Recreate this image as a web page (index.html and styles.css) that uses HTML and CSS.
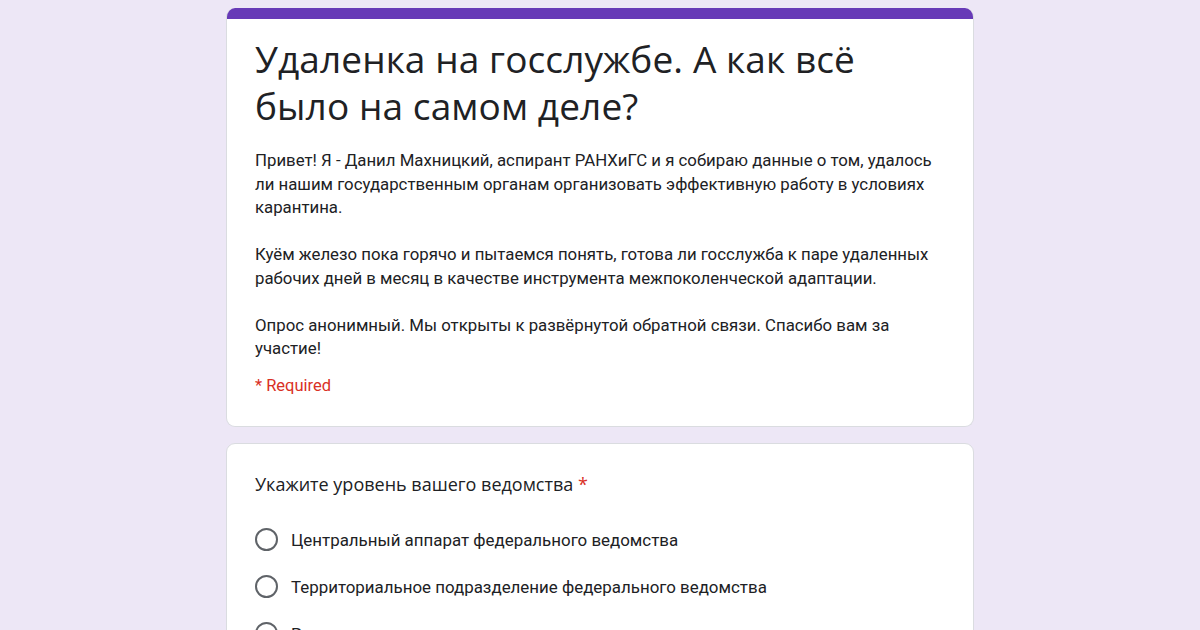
FILE: index.html
```html
<!DOCTYPE html>
<html lang="ru">
<head>
<meta charset="utf-8">
<title>Удаленка на госслужбе</title>
<link rel="stylesheet" href="styles.css">
</head>
<body>
<main class="form">
  <section class="card header-card">
    <div class="accent"></div>
    <div class="card-body">
      <h1 class="title">Удаленка на госслужбе. А как всё было на самом деле?</h1>
      <div class="desc">
        <p>Привет! Я - Данил Махницкий, аспирант РАНХиГС и я собираю данные о том, удалось ли нашим государственным органам организовать эффективную работу в условиях карантина.</p>
        <p>Куём железо пока горячо и пытаемся понять, готова ли госслужба к паре удаленных рабочих дней в месяц в качестве инструмента межпоколенческой адаптации.</p>
        <p>Опрос анонимный. Мы открыты к развёрнутой обратной связи. Спасибо вам за участие!</p>
      </div>
      <div class="required">* Required</div>
    </div>
  </section>
  <section class="card question-card">
    <div class="q-title">Укажите уровень вашего ведомства <span class="star">*</span></div>
    <ul class="options">
      <li class="option"><span class="radio"></span><span>Центральный аппарат федерального ведомства</span></li>
      <li class="option"><span class="radio"></span><span>Территориальное подразделение федерального ведомства</span></li>
      <li class="option"><span class="radio"></span><span>Региональное ведомство</span></li>
    </ul>
  </section>
</main>
</body>
</html>
```
FILE: styles.css
```css
* { box-sizing: border-box; }
html, body { margin: 0; padding: 0; }
body {
  background: #ede7f6;
  font-family: Roboto, "Liberation Sans", sans-serif;
  color: #202124;
  height: 630px;
  overflow: hidden;
}
.form {
  width: 748px;
  margin: 0 auto;
  padding-top: 8px;
  display: flex;
  flex-direction: column;
  gap: 16px;
}
.card {
  background: #fff;
  border: 1px solid #dadce0;
  border-radius: 9px;
  overflow: hidden;
}
.header-card { border-top: none; }
.accent {
  height: 11px;
  background: #673ab7;
}
.card-body {
  padding: 16px 28px 29px 28px;
}
.title {
  margin: 0;
  max-width: 640px;
  font-family: "Open Sans", sans-serif;
  font-weight: 400;
  font-size: 37px;
  line-height: 47px;
  letter-spacing: 0.1px;
  color: #202124;
}
.desc {
  margin-top: 20px;
  font-size: 16.8px;
  line-height: 23.5px;
}
.desc p { margin: 0 0 23.5px 0; }
.desc p:last-child { margin-bottom: 0; }
.required {
  margin-top: 13px;
  color: #d93025;
  font-size: 16.5px;
  line-height: 23px;
}
.question-card {
  padding: 25px 28px 0 28px;
  height: 260px;
}
.q-title {
  font-family: "Open Sans", sans-serif;
  font-size: 18px;
  line-height: 26px;
  margin-top: 2px;
}
.star { color: #d93025; }
.options {
  list-style: none;
  margin: 31px 0 0 0;
  padding: 0;
  display: flex;
  flex-direction: column;
  gap: 23px;
}
.option {
  display: flex;
  align-items: center;
  gap: 13px;
  font-size: 16.9px;
  line-height: 24px;
}
.radio {
  width: 23px;
  height: 23px;
  border: 2px solid #5f6368;
  border-radius: 50%;
  flex: none;
}
```
